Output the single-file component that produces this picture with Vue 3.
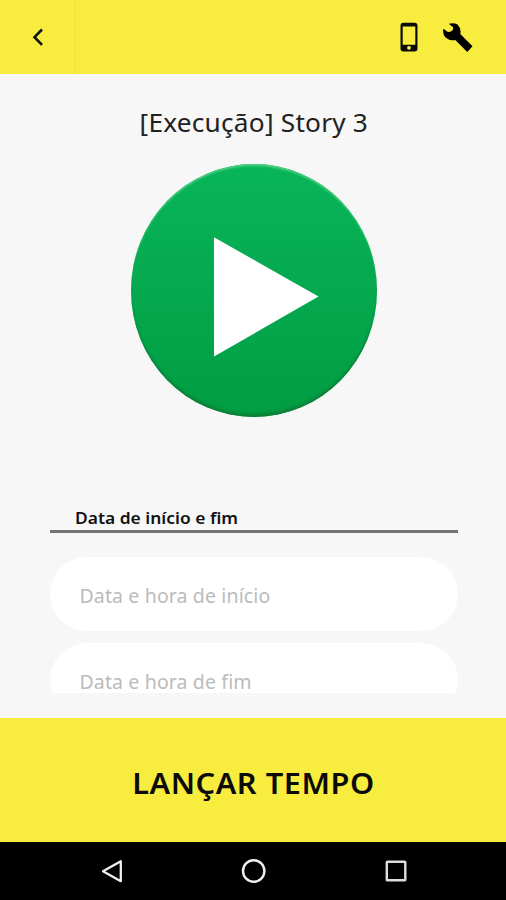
<script setup>
import { ref } from 'vue'

const title = ref('[Execução] Story 3')
const start = ref('')
const end = ref('')
</script>

<template>
  <div class="page">
    <header class="header">
      <button class="back" aria-label="Voltar">
        <svg width="12" height="20" viewBox="0 0 12 20">
          <path d="M10 2.500 2.500 10.200l7.500 7.700" fill="none" stroke="#111" stroke-width="2.600" />
        </svg>
      </button>
      <div class="actions">
        <svg width="18" height="30" viewBox="0 0 18 30">
          <path
            fill="#0b0b08"
            fill-rule="evenodd"
            d="M3.500 .8h11A3 3 0 0 1 17.500 3.800v22.800a3 3 0 0 1-3 3h-11a3 3 0 0 1-3-3v-22.800a3 3 0 0 1 3-3zM2.700 4.500v18.300h12.600V4.500zM9 23.900a1.900 1.900 0 1 0 .01 0z"
          />
        </svg>
        <svg width="31" height="31" viewBox="0 0 31 31">
          <path
            fill="#000"
            d="M.5 6.800 4.800 10Q7 10.200 9 8.800 10.500 7.500 10 5.200L5.800 1.800Q10.500 .2 14.500 2.500 18.500 6.500 17.300 12L29.500 24.300 24.300 30 12.200 18Q6.500 19 2.500 15.500-.8 11.500 .5 6.800z"
          />
        </svg>
      </div>
    </header>

    <main class="content">
      <h1 class="title">{{ title }}</h1>
      <button class="play" aria-label="Iniciar">
        <svg width="246" height="253" viewBox="0 0 246 253">
          <path d="M83 73.300v119.200L187.500 132.500z" fill="#fff" />
        </svg>
      </button>

      <section class="dates">
        <div class="legend"><span>Data de início e fim</span></div>
        <div class="fields">
          <input v-model="start" class="field" placeholder="Data e hora de início" />
          <input v-model="end" class="field" placeholder="Data e hora de fim" />
        </div>
      </section>
    </main>

    <button class="submit"><span>LANÇAR TEMPO</span></button>

    <nav class="navbar">
      <svg width="24" height="26" viewBox="0 0 24 26">
        <path d="M20.800 3.200v20L3 13.200z" fill="none" stroke="#eee" stroke-width="2.300" stroke-linejoin="round" />
      </svg>
      <svg width="26" height="26" viewBox="0 0 26 26">
        <circle cx="12.700" cy="13" r="10.700" fill="none" stroke="#eee" stroke-width="2.400" />
      </svg>
      <svg width="24" height="26" viewBox="0 0 24 26">
        <rect x="2.800" y="3.800" width="18.500" height="18.500" rx="0.5" fill="none" stroke="#ddd" stroke-width="2.400" />
      </svg>
    </nav>
  </div>
</template>

<style>
body {
  margin: 0;
  background-color: #f7f7f7;
}
</style>

<style scoped>
.page {
  width: 506px;
  height: 900px;
  display: flex;
  flex-direction: column;
  overflow: hidden;
  background-color: #f7f7f7;
  font-family: 'Noto Sans', 'Open Sans', sans-serif;
}

button {
  border: 0;
  padding: 0;
  background: none;
  font-family: inherit;
}

.header {
  display: flex;
  justify-content: space-between;
  flex: none;
  height: 74px;
  background-color: #f8ed3f;
}

.back {
  display: flex;
  align-items: center;
  justify-content: center;
  width: 76px;
  border-right: 1px solid #eee33b;
}

.actions {
  display: flex;
  align-items: center;
  gap: 25px;
  padding-right: 32px;
}

.content {
  flex: none;
  display: flex;
  flex-direction: column;
  align-items: center;
  height: 644px;
}

.title {
  margin: 29px 0 0 1px;
  height: 38px;
  line-height: 38px;
  font-size: 25px;
  font-weight: 400;
  letter-spacing: 0.2px;
  color: #222;
  white-space: nowrap;
  transform: scaleX(1.05);
}

.play {
  flex: none;
  width: 246px;
  height: 253px;
  margin: 23px 0 0 1px;
  border-radius: 50%;
  background: linear-gradient(#09b45a, #019d43);
  box-shadow:
    inset 0 3px 2px -1px #4fd083,
    inset 0 -4px 3px -1px #0d7f38;
}

.play svg {
  display: block;
}

.dates {
  width: 408px;
  margin: 88px 0 0 1px;
}

.legend {
  height: 25px;
  padding-left: 25px;
  border-bottom: 3px solid #747474;
  line-height: 26px;
  font-size: 16.5px;
  font-weight: 600;
  color: #111;
  white-space: nowrap;
}

.legend span {
  display: inline-block;
  transform: scaleX(1.055);
  transform-origin: left;
}

.fields {
  height: 136px;
  margin-top: 24px;
  display: flex;
  flex-direction: column;
  gap: 12px;
  overflow: hidden;
}

.field {
  flex: none;
  box-sizing: border-box;
  width: 408px;
  height: 74px;
  padding: 3px 30px 0;
  border: 0;
  border-radius: 37px;
  background-color: #fff;
  font-family: inherit;
  font-size: 19.5px;
  font-weight: 400;
  letter-spacing: 0.13px;
}

.field::placeholder {
  color: #bbb;
  opacity: 1;
}

.submit {
  flex: none;
  height: 124px;
  padding-top: 4px;
  background-color: #f8ed3f;
  font-size: 29px;
  font-weight: 600;
  letter-spacing: 0.5px;
  color: #0b0b08;
  white-space: nowrap;
}

.submit span {
  display: inline-block;
  transform: scaleX(1.06);
}

.navbar {
  flex: 1;
  display: flex;
  align-items: center;
  justify-content: space-between;
  padding: 0 98px 0 100px;
  background-color: #000;
}
</style>
